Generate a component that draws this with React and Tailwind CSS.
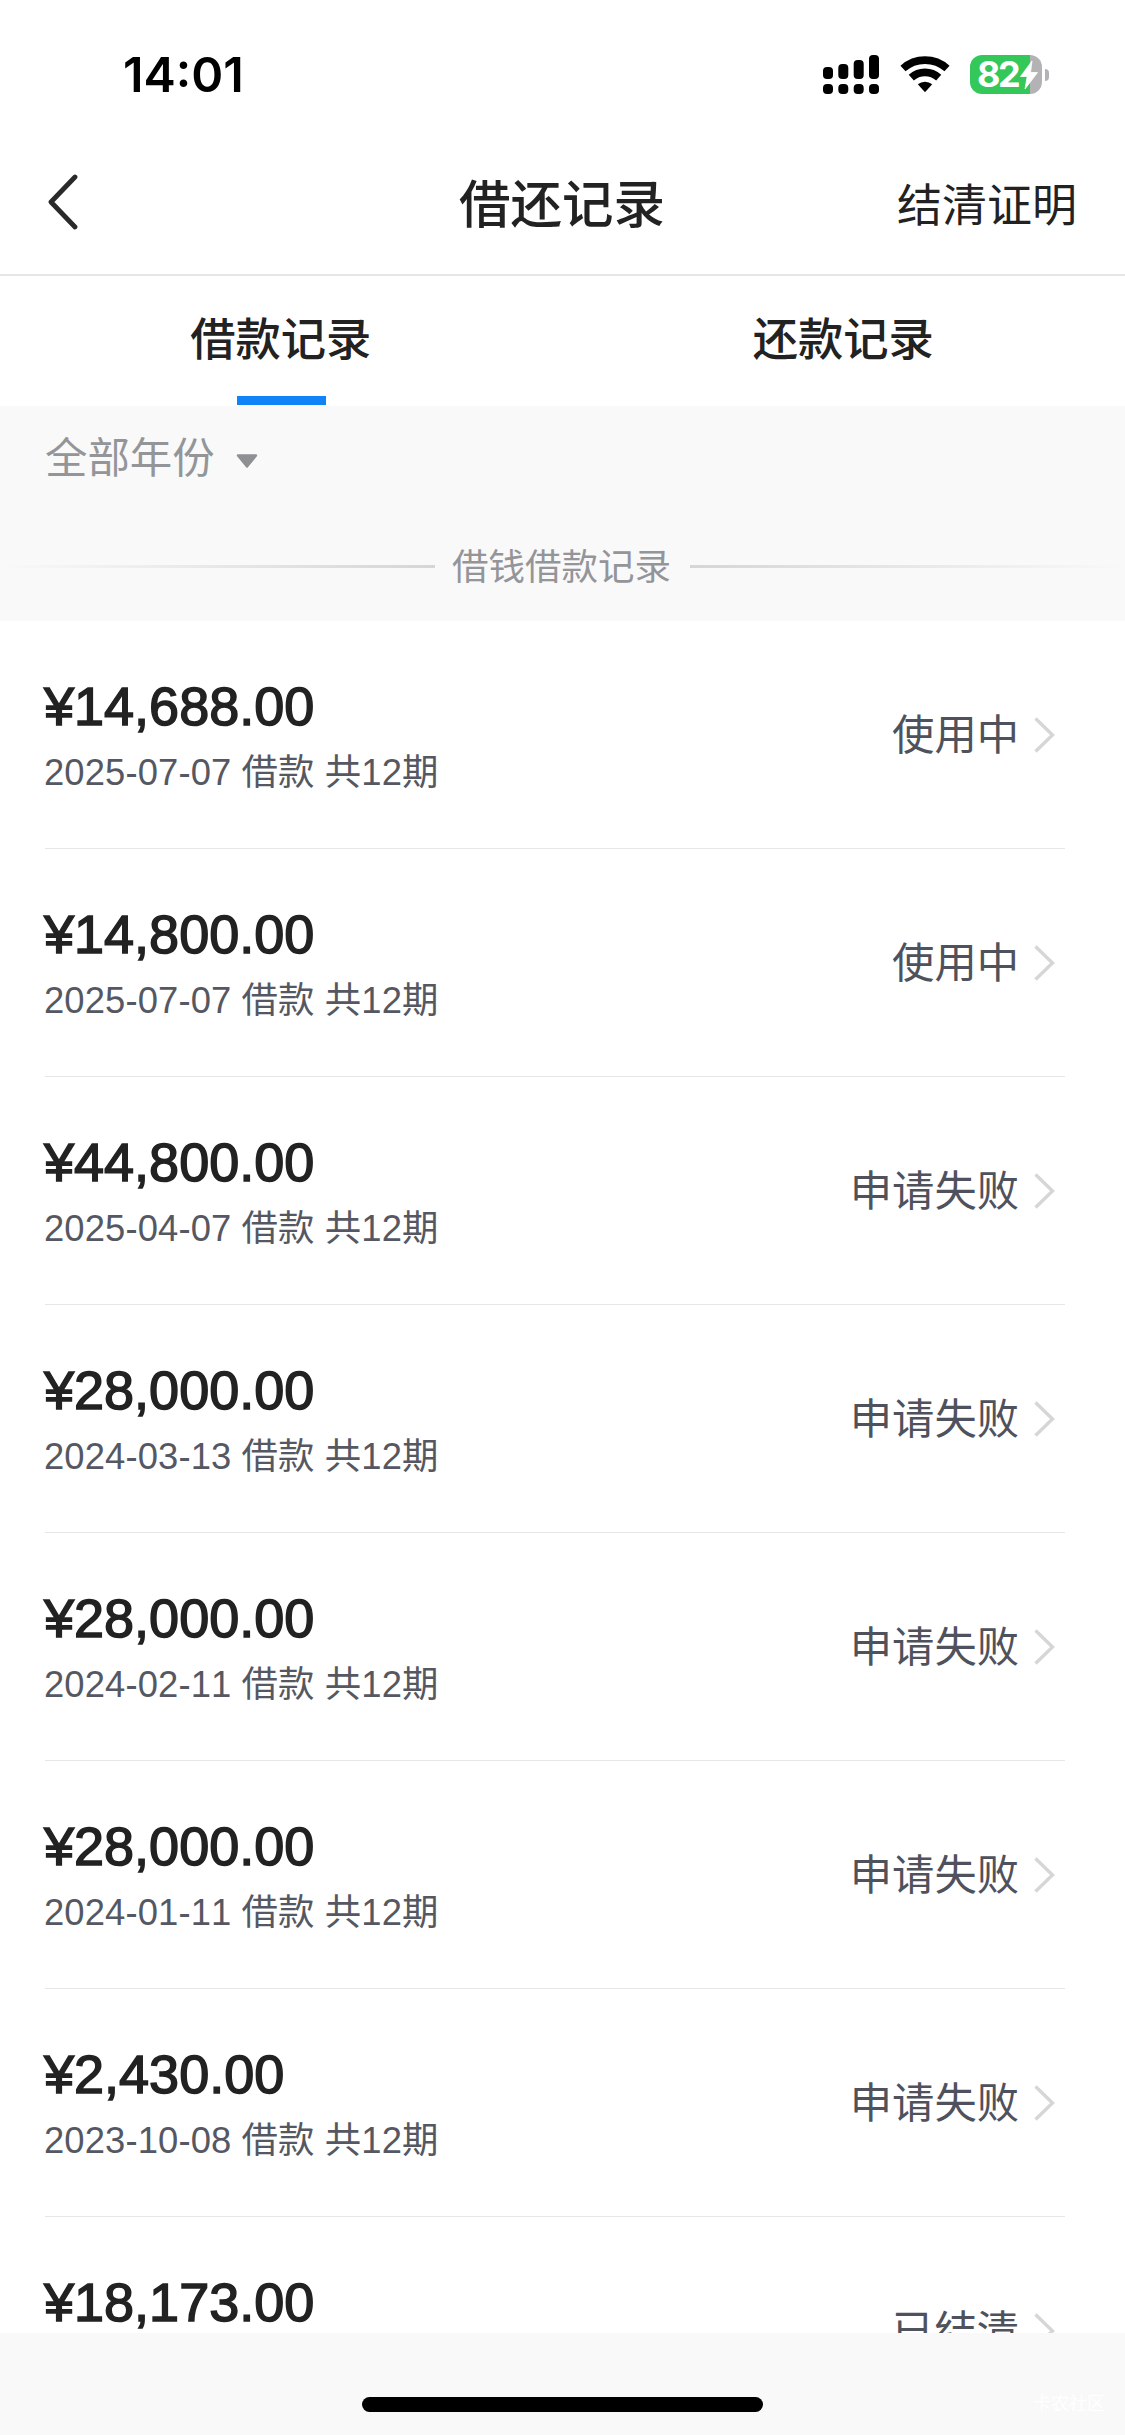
const records = [
  { amount: "¥14,688.00", detail: "2025-07-07 借款 共12期", status: "使用中" },
  { amount: "¥14,800.00", detail: "2025-07-07 借款 共12期", status: "使用中" },
  { amount: "¥44,800.00", detail: "2025-04-07 借款 共12期", status: "申请失败" },
  { amount: "¥28,000.00", detail: "2024-03-13 借款 共12期", status: "申请失败" },
  { amount: "¥28,000.00", detail: "2024-02-11 借款 共12期", status: "申请失败" },
  { amount: "¥28,000.00", detail: "2024-01-11 借款 共12期", status: "申请失败" },
  { amount: "¥2,430.00", detail: "2023-10-08 借款 共12期", status: "申请失败" },
  { amount: "¥18,173.00", detail: "", status: "已结清" },
];

function SignalIcon() {
  return (
    <svg width="56" height="39" viewBox="0 0 56 39" fill="#000">
      <rect x="0" y="12" width="10" height="12" rx="4" />
      <rect x="15.3" y="9" width="10" height="15" rx="4" />
      <rect x="30.7" y="5" width="10" height="19" rx="4" />
      <rect x="46" y="0" width="10" height="24" rx="4" />
      <rect x="0" y="29" width="10" height="10" rx="4" />
      <rect x="15.3" y="29" width="10" height="10" rx="4" />
      <rect x="30.7" y="29" width="10" height="10" rx="4" />
      <rect x="46" y="29" width="10" height="10" rx="4" />
    </svg>
  );
}

function WifiIcon() {
  return (
    <svg width="48" height="36" viewBox="0 0 48 36" fill="none" className="overflow-visible">
      <path d="M2 11.5 A33 33 0 0 1 46 11.5" stroke="#000" strokeWidth="7.6" />
      <path d="M10.3 20.6 A20.5 20.5 0 0 1 37.7 20.6" stroke="#000" strokeWidth="7.6" />
      <path d="M16.8 27.2 A11.5 11.5 0 0 1 31.2 27.2 L24.7 34.6 Q24 35.3 23.3 34.6 Z" fill="#000" />
    </svg>
  );
}

function BatteryIcon() {
  return (
    <div className="flex items-center gap-[3px]">
      <div className="flex h-[39px] w-[72px] items-center rounded-[12px] bg-[linear-gradient(to_right,#34c759_60px,#b3b3b6_60px)] pl-[7px]">
        <span className="w-[42px] font-['Inter',sans-serif] text-[36px] leading-[39px] font-bold tracking-[-2.5px] text-white">
          82
        </span>
        <svg width="20" height="30" viewBox="0 0 20 30" className="overflow-visible">
          <path
            d="M13 1 L1.5 16.5 H8.2 L6 29 L18.5 12.5 H11.5 Z"
            fill="#fff"
            stroke="#fff"
            strokeWidth="0.8"
            strokeLinejoin="round"
          />
        </svg>
      </div>
      <div className="h-[12px] w-[4px] rounded-r-full bg-[#b3b3b6]" />
    </div>
  );
}

function StatusBar() {
  return (
    <div className="flex h-[149px] shrink-0 items-center justify-between pr-[76px] pl-[123px]">
      <span className="pt-[1px] font-['Inter',sans-serif] text-[48.5px] leading-none font-semibold text-black">14:01</span>
      <div className="flex items-center">
        <SignalIcon />
        <div className="ml-[22px]">
          <WifiIcon />
        </div>
        <div className="ml-[21px]">
          <BatteryIcon />
        </div>
      </div>
    </div>
  );
}

function NavBar() {
  return (
    <header className="grid h-[127px] shrink-0 grid-cols-3 items-start border-b-2 border-[#e6e6e6] px-[48px] pt-[24px] text-[#222]">
      <svg
        width="30"
        height="56"
        viewBox="0 0 30 56"
        className="mt-[1px]"
        fill="none"
        stroke="#2a2a2a"
        strokeWidth="4.8"
        strokeLinecap="round"
        strokeLinejoin="round"
      >
        <path d="M27 3 L3 28 L27 53" />
      </svg>
      <h1 className="-ml-[1px] pt-[2px] text-center text-[51.5px] leading-[60px] font-medium">借还记录</h1>
      <span className="pt-[3px] text-right text-[45px] leading-[62px]">结清证明</span>
    </header>
  );
}

function Tabs() {
  return (
    <div className="grid h-[130px] shrink-0 grid-cols-2 text-center text-[45.3px] leading-[130px] font-medium text-[#222]">
      <div className="flex flex-col items-center">
        <span className="-ml-[1px] h-[120px]">借款记录</span>
        <div className="h-[9px] w-[89px] bg-[#1083f7]" />
      </div>
      <div className="-ml-[1px]">还款记录</div>
    </div>
  );
}

function Filters() {
  return (
    <section className="h-[215px] shrink-0 bg-[#f9f9f9] text-[#949599]">
      <div className="flex h-[106px] items-center gap-[21px] pl-[45px] text-[42.4px]">
        <span className="leading-[106px]">全部年份</span>
        <svg width="22" height="14" viewBox="0 0 22 14" className="mt-[3px]">
          <path d="M2 1.5 H20 L11 12.5 Z" fill="#8f9094" stroke="#8f9094" strokeWidth="2.4" strokeLinejoin="round" />
        </svg>
      </div>
      <div className="flex h-[108px] items-start">
        <div className="mt-[53px] h-[3px] flex-1 bg-linear-to-r from-[#f9f9f9] to-[#d6d6d8]" />
        <span className="mr-[19px] ml-[17px] text-[36.5px] leading-[112px]">借钱借款记录</span>
        <div className="mt-[53px] h-[3px] flex-1 bg-linear-to-l from-[#f9f9f9] to-[#d6d6d8]" />
      </div>
    </section>
  );
}

function Row({ amount, detail, status }) {
  return (
    <li className="flex h-[228px] shrink-0 items-center justify-between border-b border-[#e6e6e6]">
      <div className="-ml-[1px] pt-[7px]">
        <div className="text-[54px] leading-[66px] text-[#222] [-webkit-text-stroke:1.5px_#222]">{amount}</div>
        <div className="h-[64px] text-[36.4px] leading-[67px] tracking-[0.12px] text-[#555862] [font-kerning:none]">
          {detail}
        </div>
      </div>
      <div className="flex items-center gap-[15px] pr-[10px]">
        <span className="pt-[2px] text-[42.3px] leading-[60px] text-[#4f525c]">{status}</span>
        <svg width="21" height="36" viewBox="0 0 21 36" fill="none" stroke="#d6d6d6" strokeWidth="3.4">
          <path d="M1.5 1.5 L18.5 18 L1.5 34.5" />
        </svg>
      </div>
    </li>
  );
}

export default function App() {
  return (
    <div className="flex h-[2435px] w-[1125px] flex-col overflow-hidden bg-white font-['Liberation_Sans','Noto_Sans_CJK_SC',sans-serif]">
      <StatusBar />
      <NavBar />
      <Tabs />
      <Filters />
      <ul className="flex h-[1712px] shrink-0 flex-col overflow-hidden pr-[60px] pl-[45px]">
        {records.map((record, i) => (
          <Row key={i} {...record} />
        ))}
      </ul>
      <footer className="relative flex flex-1 items-end justify-center bg-[#f9f9f9] pb-[23px]">
        <div className="h-[15px] w-[401px] rounded-full bg-black" />
        <span className="absolute right-[20px] bottom-[18px] text-[18px] leading-[26px] text-white">卡农社区</span>
      </footer>
    </div>
  );
}
